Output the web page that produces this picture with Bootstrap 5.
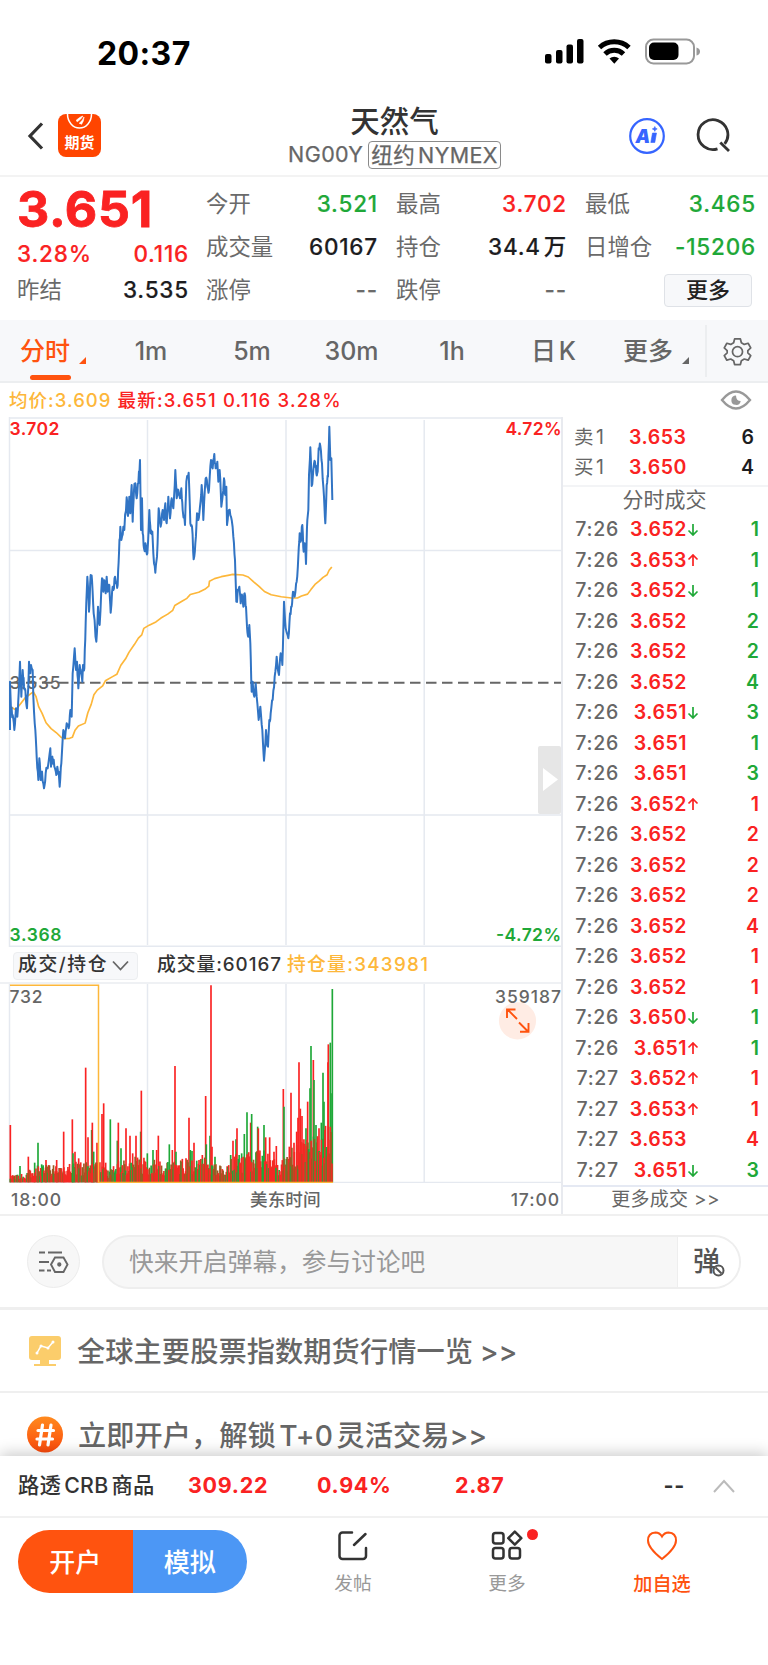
<!DOCTYPE html>
<html lang="zh-CN">
<head>
<meta charset="utf-8">
<meta name="viewport" content="width=device-width, initial-scale=1">
<title>天然气 NG00Y</title>
<link href="https://cdn.jsdelivr.net/npm/bootstrap@5.3.0/dist/css/bootstrap.min.css" rel="stylesheet">
<style>
:root{--up:#fa2222;--down:#1fa838;--brand:#ff530f;--ink:#333;--mute:#666;--line:#e8eaef;--avg:#fdb73a}
html,body{overflow:hidden}
body{font-family:Inter,"Noto Sans CJK SC",sans-serif;color:var(--ink);background:#fff;line-height:1;width:768px;height:1665px}
svg{display:block;flex:none}
.up{color:var(--up)}.down{color:var(--down)}.brand{color:var(--brand)}.mute{color:var(--mute)}.avg{color:var(--avg)}
.statusbar{height:103px;padding:1px 67px 0 97px}
.clock{font-size:32px;font-weight:700;color:#000;letter-spacing:.4px;padding-top:3px}
.topbar{height:74px;padding:0 37px 7px 27px;border-bottom:2px solid #f3f3f3}
.app-logo{width:43px;height:43px;margin-left:14px}
.title-block{left:0;right:0;top:1px;padding-left:21px;pointer-events:none}
.title-name{font-size:29.5px;font-weight:500;line-height:34px;height:37px}
.title-code{font-size:21.5px;color:var(--mute);gap:5px;height:28px;letter-spacing:.4px;word-spacing:-3.5px;-webkit-text-stroke:.25px}
.exch{border:1.5px solid #8a8a8a;border-radius:4px;height:28px;padding:0 2px;line-height:26px}
.quote{height:143px;padding:6px 11px 0 17px;gap:18px;font-size:22.4px}
.quote .mute{color:#6a6a6a}
.quote .val{font-weight:500;font-size:22.5px;letter-spacing:.8px;word-spacing:-4px;-webkit-text-stroke:.15px}
.quote .main-col{width:172px}
.big-price{font-size:50px;font-weight:700;line-height:53px;height:52px;letter-spacing:.7px;-webkit-text-stroke:.8px}
.quote-grid{grid-template-columns:172px 171px 171px;column-gap:18px;grid-auto-rows:43px;margin-left:-1px}
.black{color:#1d1d1f}
.more-btn{width:88px;height:33px;border:1.5px solid #dfe2e7;border-radius:4px;background:#f7f8fa;font-size:22px;font-weight:500;color:#222;line-height:30px;margin-right:4px}
.tabs{height:63px;background:#f7f8fa;border-bottom:2px solid #eceef0;font-size:25px;font-weight:500;color:var(--mute);word-spacing:-4px}
.tabs .tab-item{line-height:63px;text-align:center}
.tabs .underbar{left:30px;width:41px;height:5px;bottom:1px;border-radius:3px;background:var(--brand)}
.tri{width:0;height:0;border-left:7px solid transparent;border-bottom:7px solid currentColor;bottom:17px}
.gear{width:63px;margin-top:5px;height:52px;border-left:2px solid #eceef0}
.legend-row{height:34px;padding:0 16px 0 9px;font-size:18.5px;font-weight:500;letter-spacing:1.05px}
.left-col{width:563px;border-right:2px solid var(--line)}
.handle{left:538px;top:329px;width:23px;height:68px;background:#e6e6e6;border-radius:2px}
.vol-tools{height:37px;padding:2px 0 0 13px;font-size:18.8px;font-weight:500;border-bottom:2px solid #eff1f4;letter-spacing:.7px}
.vol-select{width:125px;height:28px;border:1px solid #eceef0;border-radius:4px;background:#f7f8fa;padding:0 8px 0 4px;letter-spacing:1.6px}
.axis-row{height:31px;padding:2px 1px 0 11px;font-size:17.6px;color:var(--mute);font-weight:500}
.axis-row .hour{letter-spacing:.9px}
.right-col{width:205px;font-size:19.5px;font-weight:500}
.book{height:70px;padding:5px 14px 0 11px;border-bottom:2px solid #f3f4f6}
.book>div{height:30.5px}
.book .mute{word-spacing:-3px;width:55px}
.px{letter-spacing:.5px;font-weight:600}
.qty{font-weight:600}
.trade{height:30.5px;padding:1px 9px 0 12px}
.trade .tm{width:44px;color:var(--mute);letter-spacing:.75px;white-space:nowrap}
.trade .px{width:68px;text-align:right}
.trade .ar{width:13px}
.more-trades{height:30px;border-top:2px solid #e5e9f3;color:var(--mute);font-weight:400;font-size:19px;padding:0 0 3px;letter-spacing:.3px}
.talk{height:96px;border-top:2px solid #f0f0f0;border-bottom:3px solid #efefef;padding:0 27px}
.round-btn{width:53px;height:53px;border:1px solid #ececec;background:#f7f7f7}
.talk-input{height:54px;margin-left:22px;border:2px solid #eee;background:#f7f7f7;color:#999;font-size:24.7px;overflow:hidden}
.talk-toggle{width:62px;background:#fff;border-left:1px solid #eee;color:#555;font-size:27px;font-weight:500}
.promo{height:83px;padding-left:27px;font-size:28.2px;color:var(--mute);font-weight:500;border-bottom:2px solid #efefef;letter-spacing:.1px;word-spacing:-1px}
.promo span{padding-top:3px}
.bottombar{height:209px;background:#fff;box-shadow:0 -3px 14px rgba(0,0,0,.2)}
.ticker{height:62px;border-bottom:2px solid #f1f1f1;padding-left:18px;font-size:21.3px;word-spacing:-3px;letter-spacing:.3px;font-weight:500}
.ticker b{font-weight:700;font-size:21.5px;letter-spacing:.7px}
.pill{width:229px;height:63px;margin:12px 0 0 18px;font-size:26px;font-weight:500;color:#fff}
.pill>div{padding-top:2px}
.foot-item{font-size:18.7px;color:#999;font-weight:500}
.foot-item.fav{color:var(--brand)}
</style>
</head>
<body class="d-flex flex-column">

<div class="statusbar d-flex align-items-center justify-content-between">
  <span class="clock">20:37</span>
  <svg width="157" height="28" viewBox="0 0 157 28">
    <g fill="#000"><rect x="1" y="16" width="6.500" height="9.500" rx="2"/><rect x="12" y="12" width="6.500" height="13.500" rx="2"/><rect x="22.500" y="6.500" width="6.500" height="19" rx="2"/><rect x="33" y="1" width="6.500" height="24.500" rx="2"/></g>
    <g fill="none" stroke="#000" stroke-width="5"><path d="M55.500 9.500a22 22 0 0 1 29.500 0"/><path d="M61 16a13.500 13.500 0 0 1 18.500 0"/></g>
    <path fill="#000" d="M65.500 20.500a7 7 0 0 1 9.500 0l-4.700 5.200z"/>
    <rect x="102" y="1.500" width="48" height="24" rx="7.500" fill="#fff" stroke="#999" stroke-width="2"/>
    <rect x="105" y="4.500" width="29.500" height="17.500" rx="5" fill="#000"/>
    <path fill="#999" d="M152.500 9.500q3.500 1 3.500 4t-3.500 4z"/>
  </svg>
</div>

<header class="topbar position-relative d-flex align-items-center">
  <svg width="17" height="28" viewBox="0 0 17 28"><path d="M15 1.500 3 14l12 12.500" fill="none" stroke="#333" stroke-width="3.200"/></svg>
  <svg class="app-logo" viewBox="0 0 43 43"><rect width="43" height="43" rx="8" fill="#ff4500"/><path d="M9.500 0a12 14 0 0 0 24 0" fill="none" stroke="#fff" stroke-width="1.500"/><path d="M18 6.500q4-4 7-4.500-2 3.500-6 6M21 9.500q4-3 5-6.500 0 4-2.500 7.500" fill="#fff" stroke="#fff" stroke-width=".6"/><text x="21.500" y="33.500" text-anchor="middle" font-size="15" font-weight="700" fill="#fff" font-family="Noto Sans CJK SC">期货</text></svg>
  <div class="title-block position-absolute d-flex flex-column align-items-center">
    <div class="title-name">天然气</div>
    <div class="title-code d-flex align-items-center"><span>NG00Y</span><span class="exch">纽约 NYMEX</span></div>
  </div>
  <svg class="ms-auto" width="36" height="36" viewBox="0 0 36 36"><circle cx="18" cy="18" r="16.800" fill="none" stroke="#3665ff" stroke-width="2.200"/><text x="6.500" y="24.700" font-size="18.500" font-weight="900" font-style="italic" fill="#3665ff" font-family="Inter">A</text><path d="M23.500 15h4l-1.700 9.500h-4zM25.800 8.500l.7 1.700 1.700.7-1.700.8-.7 1.700-.7-1.700-1.800-.8 1.800-.7z" fill="#3665ff" stroke="#3665ff" stroke-width=".6"/></svg>
  <svg style="margin-left:31px" width="35" height="35" viewBox="0 0 35 35" fill="none" stroke="#333" stroke-width="2.800"><path d="M21.500 30.800a14.900 14.900 0 1 1 7.200-5"/><path d="M24.300 24.500 33 33"/></svg>
</header>

<section class="quote d-flex">
  <div class="main-col">
    <div class="big-price up">3.651</div>
    <div class="d-flex justify-content-between align-items-center val up" style="height:38px"><span>3.28%</span><span>0.116</span></div>
    <div class="d-flex justify-content-between align-items-center" style="height:34px"><span class="mute">昨结</span><span class="val black">3.535</span></div>
  </div>
  <div class="quote-grid d-grid" id="quoteGrid"></div>
</section>

<nav class="tabs position-relative d-flex">
  <div class="tab-item brand position-relative" style="width:90px">分时<i class="tri position-absolute" style="left:79px"></i></div>
  <div class="tab-item" style="width:122px">1m</div>
  <div class="tab-item" style="width:80px">5m</div>
  <div class="tab-item" style="width:119px">30m</div>
  <div class="tab-item" style="width:82px">1h</div>
  <div class="tab-item" style="width:121px">日 K</div>
  <div class="tab-item position-relative" style="width:91px"><span style="margin-left:-23px">更多</span><i class="tri position-absolute" style="left:68px"></i></div>
  <div class="gear d-flex align-items-center justify-content-center">
    <svg width="29" height="29" viewBox="0 0 30 30" fill="none" stroke="#666" stroke-width="1.800" stroke-linejoin="round"><path d="M12 2h6l1 4 3 1.700 4-1.200 2.700 4.800-3 2.700v2.500l3 2.700-2.700 4.800-4-1.200L19 24.500l-1 4h-6l-1-4-3-1.700-4 1.200-2.700-4.800 3-2.700V14l-3-2.700L4 6.500l4 1.200L11 6z"/><circle cx="15" cy="15.200" r="5.200"/></svg>
  </div>
  <div class="underbar position-absolute"></div>
</nav>

<div class="legend-row d-flex align-items-center">
  <span class="avg">均价:3.609</span><span class="up" style="margin-left:6px;letter-spacing:1.2px">最新:3.651 0.116 3.28%</span>
  <svg class="ms-auto" width="32" height="20" viewBox="0 0 32 20"><path d="M2 10Q16-7 30 10 16 27 2 10z" fill="none" stroke="#999" stroke-width="2.400"/><path d="M16 5.500a4.700 4.700 0 1 0 4.700 5.500q-4.500 0-4.700-5.500z" fill="#999"/></svg>
</div>

<main class="d-flex" style="height:797px">
  <div class="left-col position-relative">
    <svg width="561" height="530" viewBox="0 0 561 530">
      <g fill="none" stroke="#e5e9f0" stroke-width="1.500"><path d="M9.500 0v530M147.500 3v525M286 3v525M424.200 3v525"/><path d="M9 1h552M9 133.500h552M9 398h552"/><path d="M9 529.500h552" stroke-width="2"/></g>
      <g font-family="Inter" font-size="17.500" font-weight="600">
        <text x="9.500" y="17.500" fill="#fa2222" textLength="50">3.702</text>
        <text x="505.500" y="17.500" fill="#fa2222" textLength="56">4.72%</text>
        <text x="9.500" y="271.500" fill="#666" font-weight="500" textLength="51">3.535</text>
        <text x="9.500" y="524" fill="#1fa838" textLength="52">3.368</text>
        <text x="496" y="524" fill="#1fa838" textLength="65">-4.72%</text>
      </g>
      <path d="M10 265.700h551" stroke="#666" stroke-width="2" stroke-dasharray="10.500 5.500"/>
      <g transform="translate(0 -7) scale(.33333)" fill="none" stroke-linejoin="round">
        <path transform="translate(33 985) scale(1.011 .97) translate(-33 -985)" stroke="#fdb73a" stroke-width="5" d="M33 888l14 9 15-20 12-16 15-12 10-8 8 14 8 32 10 20 12 30 15 18 15 12 15 15 8 4 17-1 8-3 8-22 10-13 20-9 8-32 10-26 8-30 10-14 16-13 8-16 20-12 14-8 12-28 14-20 10-20 16-24 12-20 10-10 6-20 16-10 20-10 15-12 20-12 15-12 6-15 20-12 16-10 10-12 25-7 18-9 12-10 2-15 15-8 20-6 20-4 14-3 30 2 16 6 16 15 16 14 16 16 20 10 30 6 30 4h18l12-6 18-6 10-14 12-16 12-10 12-12 12-8 6-14 8-10"/>
        <path id="priceLine" stroke="#3174c4" stroke-width="6"/>
      </g>
    </svg>
    <div class="handle position-absolute"><svg width="23" height="68"><path d="M5 22v23l15-11.500z" fill="#fff"/></svg></div>
    <div class="vol-tools d-flex align-items-center">
      <div class="vol-select d-flex align-items-center justify-content-between"><span>成交/持仓</span><svg width="17" height="11" viewBox="0 0 17 11"><path d="m1 1.500 7.500 8 7.500-8" fill="none" stroke="#666" stroke-width="1.800"/></svg></div>
      <span style="margin-left:19px;white-space:nowrap;letter-spacing:.95px">成交量:60167</span><span class="avg" style="margin-left:5px;letter-spacing:1.3px">持仓量:343981</span>
    </div>
    <svg width="561" height="199" viewBox="0 0 561 199">
      <path d="M9.500 0v199M147.500 0v199M286 0v199M424.200 0v199M9 198.500h552" fill="none" stroke="#e5e9f0" stroke-width="1.500"/>
      <circle cx="517.500" cy="36.800" r="18.600" fill="#ffece4"/>
      <g font-family="Inter" font-size="17.500" font-weight="500" fill="#666"><text x="9.500" y="18.500" textLength="33">732</text><text x="495" y="18.500" textLength="66">359187</text></g>
      <path d="M517 35l-9.500-9.500M507 34v-8.500h8.500M519 38.500l9 9M528.500 39v8.700H520" fill="none" stroke="#ff530f" stroke-width="1.900"/>
      <g id="bars" transform="translate(0 -184) scale(.33333)" stroke-width="5"></g>
      <path d="M10 1.300h88.500V198.500h234.500" fill="none" stroke="#fdb73a" stroke-width="1.500"/>
    </svg>
    <div class="axis-row d-flex align-items-center justify-content-between"><span class="hour">18:00</span><span style="margin-left:-2px">美东时间</span><span class="hour">17:00</span></div>
  </div>
  <div class="right-col">
    <div class="book">
      <div class="d-flex align-items-center"><span class="mute fw-normal">卖 1</span><span class="up px">3.653</span><span class="ms-auto black qty">6</span></div>
      <div class="d-flex align-items-center"><span class="mute fw-normal">买 1</span><span class="up px">3.650</span><span class="ms-auto black qty">4</span></div>
    </div>
    <div class="text-center mute fw-normal" style="height:27px;line-height:25px;font-size:21px;padding-right:2px">分时成交</div>
    <div id="trades"></div>
    <div class="more-trades d-flex align-items-center justify-content-center">更多成交 &gt;&gt;</div>
  </div>
</main>

<section class="talk d-flex align-items-center">
  <div class="round-btn rounded-circle d-flex align-items-center justify-content-center">
    <svg width="31" height="24" viewBox="0 0 31 24" fill="none" stroke="#666" stroke-width="1.900"><path d="M1 2.500h6M10 2.500h14M1 12h10M1 20.500h5.500M9 20.500h4M13 14.500l4-7h8.500l4 7-4 7.500H17z"/><circle cx="21.300" cy="14.500" r="1.200" fill="#666"/></svg>
  </div>
  <div class="talk-input rounded-pill flex-fill d-flex align-items-center justify-content-between"><span style="padding:2px 0 0 25px">快来开启弹幕，参与讨论吧</span>
    <div class="talk-toggle h-100 d-flex align-items-center position-relative"><span style="padding-left:15px">弹</span><svg class="position-absolute" style="left:34px;top:27px" width="13" height="13" viewBox="0 0 13 13"><circle cx="6.500" cy="6.500" r="5" fill="#fff" stroke="#555" stroke-width="2"/><path d="m3.500 3.500 6 6" stroke="#555" stroke-width="2"/></svg></div>
  </div>
</section>

<div class="overflow-hidden" style="height:146px;flex:none">
  <div class="promo d-flex align-items-center"><svg width="36" height="32" viewBox="0 0 36 32"><rect x="2" y="1" width="32" height="24" rx="3" fill="#fbcd6b"/><path d="M13 25h9v4h7v2H7v-2h6z" fill="#fbcd6b"/><path d="m10 18 4-7 7 2 5-6" fill="none" stroke="#fff" stroke-width="1.500"/><g fill="#fff"><circle cx="10" cy="18" r="1.500"/><circle cx="14" cy="11" r="1.500"/><circle cx="21" cy="13" r="1.500"/><circle cx="26" cy="7" r="1.500"/></g></svg><span style="margin-left:14px">全球主要股票指数期货行情一览 &gt;&gt;</span></div>
  <div class="promo d-flex align-items-center"><svg style="margin-top:2px" width="36" height="37" viewBox="0 0 36 37"><defs><linearGradient id="og" x2="0" y2="1"><stop stop-color="#ff8a1e"/><stop offset="1" stop-color="#fb4a0c"/></linearGradient></defs><circle cx="18" cy="18.500" r="18" fill="url(#og)"/><path d="m15.500 9-3 20M24 9l-3 20M11 14.500h15.500M10 23h15.500" stroke="#fff" stroke-width="3.200" stroke-linecap="round"/></svg><span style="margin-left:15px;padding-top:5px;word-spacing:-4px;letter-spacing:.05px">立即开户，解锁 T+0 灵活交易&gt;&gt;</span></div>
</div>

<footer class="bottombar position-relative">
  <div class="ticker d-flex align-items-center">
    <span style="width:170px">路透 CRB 商品</span><b class="up" style="width:129px">309.22</b><b class="up" style="width:138px">0.94%</b><b class="up">2.87</b><b class="ms-auto">--</b>
    <svg style="margin:0 33px 0 28px" width="22" height="14" viewBox="0 0 22 14"><path d="m1 13 10-11 10 11" fill="none" stroke="#bbb" stroke-width="2"/></svg>
  </div>
  <div class="d-flex">
    <div class="pill rounded-pill overflow-hidden d-flex flex-none"><div class="w-50 d-flex align-items-center justify-content-center" style="background:#ff530f">开户</div><div class="w-50 d-flex align-items-center justify-content-center" style="background:#4c97f5">模拟</div></div>
    <div class="foot-item d-flex flex-column align-items-center" style="margin-left:68px;width:76px;padding-top:12px">
      <svg width="32" height="31" viewBox="0 0 32 31" fill="none" stroke="#333" stroke-width="2.500" stroke-linecap="round"><path d="M15 2.500H5.500a3 3 0 0 0-3 3V26a3 3 0 0 0 3 3H26a3 3 0 0 0 3-3v-8M17 15 28.500 4"/></svg>
      <span class="fw-normal" style="margin-top:14px">发帖</span></div>
    <div class="foot-item d-flex flex-column align-items-center position-relative" style="margin-left:77px;width:78px;padding-top:12px">
      <svg width="32" height="31" viewBox="0 0 32 31" fill="none" stroke="#333" stroke-width="2.500"><rect x="2" y="3" width="10.500" height="10.500" rx="2.500"/><rect x="2" y="18" width="10.500" height="10.500" rx="2.500"/><rect x="18.500" y="18" width="10.500" height="10.500" rx="2.500"/><path d="m23.800 1.700 6.500 6.500-6.500 6.500-6.500-6.500z" stroke-linejoin="round"/></svg>
      <span class="fw-normal" style="margin-top:14px">更多</span><i class="position-absolute rounded-circle" style="width:11px;height:11px;background:#fa2222;left:59px;top:11px"></i></div>
    <div class="foot-item fav d-flex flex-column align-items-center" style="margin-left:78px;width:76px;padding-top:12px">
      <svg width="32" height="31" viewBox="0 0 32 31" fill="none" stroke="#ff530f" stroke-width="2"><path d="M16 29Q2 18 2 10.500 2 3 9.500 2.500q4 0 6.500 4 2.500-4 6.500-4Q30 3 30 10.500 30 18 16 29z"/></svg>
      <span style="margin-top:14px;font-size:19.200px;white-space:nowrap">加自选</span></div>
  </div>
</footer>

<script>
const quotes=[['今开','3.521','down'],['最高','3.702','up'],['最低','3.465','down'],['成交量','60167','black'],['持仓','34.4 万','black'],['日增仓','-15206','down'],['涨停','--','mute'],['跌停','--','mute']];
quoteGrid.innerHTML=quotes.map(q=>`<div class="d-flex justify-content-between align-items-center"><span class="mute">${q[0]}</span><span class="val ${q[2]}">${q[1]}</span></div>`).join('')+'<div class="d-flex justify-content-end align-items-center"><div class="more-btn text-center">更多</div></div>';

const trades='2d1g 3u1g 2d1g 2-2g 2-2g 2-4g 1d3g 1-1g 1-3g 2u1r 2-2r 2-2r 2-2r 2-4r 2-1r 2-1r 0d1g 1u1g 2u1r 3u1r 3-4r 1d3g'.split(' ');
const arrow={d:'<svg width="12" height="13" viewBox="0 0 12 13" fill="none" stroke="#1fa838" stroke-width="1.700"><path d="M6 1v11M1.500 7.500 6 12l4.500-4.500"/></svg>',u:'<svg width="12" height="13" viewBox="0 0 12 13" fill="none" stroke="#fa2222" stroke-width="1.700"><path d="M6 12V1M1.500 5.500 6 1l4.500 4.500"/></svg>','-':''};
document.getElementById('trades').innerHTML=trades.map((t,i)=>`<div class="trade d-flex align-items-center"><span class="tm text-end">7:2${i<18?6:7}</span><span class="px up">3.65${t[0]}</span><span class="ar">${arrow[t[1]]}</span><span class="ms-auto qty ${t[3]=='g'?'down':'up'}">${t[2]}</span></div>`).join('');

let seed=7;const rnd=()=>(seed=(seed*16807)%2147483647)/2147483647;
const pts='30,960 30,815 33,900 38,915 43,960 48,895 52,920 56,850 60,755 64,860 68,780 72,830 76,840 81,895 85,830 87,755 91,790 93,765 98,780 100,860 106,960 110,1040 115,1110 118,1045 122,1110 126,1085 132,1135 137,1090 143,1075 151,1015 153,1070 157,1040 163,1070 169,1095 172,1070 176,1085 179,1130 184,1060 190,960 195,985 200,940 206,955 211,900 215,920 218,790 224,715 228,780 231,755 235,835 239,765 243,790 247,815 249,765 253,775 257,640 262,500 267,605 272,495 276,510 281,610 289,695 294,590 299,645 306,505 310,545 314,515 317,550 320,500 323,545 328,525 332,608 338,530 340,540 345,500 348,520 353,525 357,430 361,350 364,390 370,350 373,360 380,262 384,318 388,260 391,310 395,225 398,335 402,240 406,220 410,265 415,220 420,150 423,360 426,265 428,370 432,415 438,410 442,430 448,300 452,370 457,365 460,430 466,488 471,440 476,295 482,350 488,300 492,330 496,280 500,340 505,260 510,325 515,265 520,295 526,180 530,265 535,240 540,265 544,235 548,300 555,345 559,215 566,188 571,340 576,350 581,448 586,400 591,310 595,330 600,290 605,225 610,330 617,205 622,230 627,240 633,150 638,175 643,132 647,175 652,155 655,215 659,180 664,290 672,205 676,255 679,230 681,345 687,300 693,320 700,380 705,450 709,575 715,540 718,530 722,580 727,560 730,590 734,550 738,590 741,650 745,680 748,645 751,700 755,845 758,815 763,860 767,820 770,860 776,930 781,890 787,960 792,1052 798,960 804,1010 808,930 812,910 818,870 824,800 830,740 837,795 842,730 847,765 852,575 857,655 865,685 870,610 875,590 879,545 884,560 890,515 895,440 899,370 902,395 907,345 911,425 914,400 918,462 922,330 925,300 927,195 931,112 935,228 940,180 945,155 949,190 953,185 956,115 961,108 966,160 972,260 976,340 980,225 984,200 988,50 991,150 994,145 997,270'.split(' ').map(p=>p.split(',').map(Number));
let d='M'+pts[0];
for(let i=1;i<pts.length;i++){const[a,b]=pts[i-1],[x,y]=pts[i];
  if(x-a>=4)for(const f of[.35,.7])d+='L'+(a+(x-a)*f).toFixed(1)+' '+(b+(y-b)*f+(rnd()-.5)*26).toFixed(1);
  d+='L'+x+' '+y;}
priceLine.setAttribute('d',d);

const env=[[30,1125],[75,1120],[110,1090],[160,1090],[210,1085],[250,1085],[290,1065],[320,1110],[360,1080],[420,1065],[470,1080],[500,1085],[530,1070],[580,1075],[620,1070],[670,1100],[710,1060],[760,1050],[800,1050],[840,1090],[880,1030],[920,1010],[960,990],[998,960]];
const spikes='31,975r 60,1098g 85,1070r 104,1088g 114,1028g 125,1093g 138,1080r 170,1080r 191,995r 217,958r 219,1060g 225,1055r 236,1075r 257,803r 264,1012r 275,990g 277,968r 281,1055g 291,1028r 306,942r 311,910r 317,1088r 331,958g 352,1022g 355,968r 363,1045g 378,985r 390,1007r 398,1060r 408,1007r 422,995g 424,872r 442,1060g 459,1050g 470,1050r 475,1007r 508,1033g 517,1050r 525,798r 528,1055g 558,1075r 567,953r 571,1050g 576,1053g 582,1028r 597,1080r 607,1065r 617,888r 619,1033g 630,1007g 633,556r 636,1040r 645,1070g 692,1065g 699,1022r 708,1018g 711,985r 725,1060g 733,1002g 741,937g 752,968r 755,942g 773,980g 775,985r 792,975g 797,1012r 809,1012r 822,1055r 829,1038r 850,867r 852,920g 868,1040r 873,878r 882,1028r 890,995r 894,953r 897,787r 901,926r 906,948r 918,985g 923,905r 930,865g 933,738g 940,780r 942,840g 948,975g 957,985r 964,968g 969,818g 972,905g 975,990r 984,787r 985,733r 991,728g 993,880g 997,567g';
let s='';const bar=(x,y,c)=>s+=`<path d="M${x} 1147V${y}" stroke="${c}"/>`;
spikes.split(' ').forEach(p=>{const[x,y]=p.slice(0,-1).split(',');bar(x,y,p.endsWith('r')?'#fa2222':'#1fa838');});
for(let x=31,k=0;x<998;x+=2.4){while(env[k+1]&&env[k+1][0]<x)k++;
  const[a,b]=env[k],[e,f]=env[k+1]||env[k],h=1146-(b+(f-b)*((x-a)/(e-a||1)));
  bar(x.toFixed(1),(1146-h*(.3+.7*rnd())).toFixed(1),rnd()<.55?'#f42a24':rnd()<.55?'#1fa838':'#9a5a22');}
bars.innerHTML=s;
</script>
<script src="https://cdn.jsdelivr.net/npm/bootstrap@5.3.0/dist/js/bootstrap.bundle.min.js"></script>
</body>
</html>
